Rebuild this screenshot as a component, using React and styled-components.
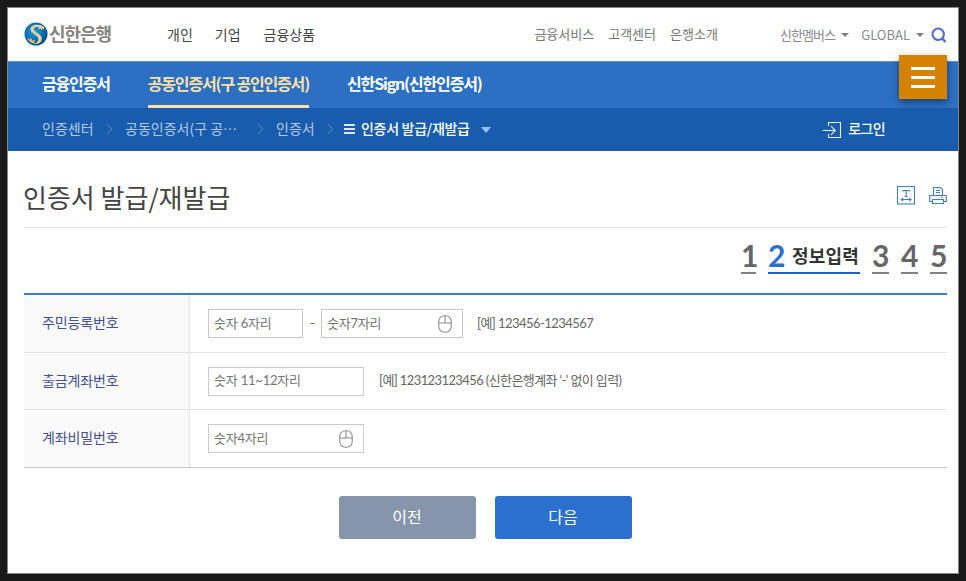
import React from 'react';
import styled, { createGlobalStyle, ThemeProvider } from 'styled-components';

const theme = {
  colors: {
    blue: '#2c70c4',
    deepBlue: '#195cad',
    point: '#2b70cf',
    gold: '#ffe0a3',
    orange: '#d48200',
    label: '#44508f',
    text: '#666666',
    line: '#e1e2e3',
  },
  fonts: {
    base: "'Noto Sans CJK KR', 'Noto Sans', sans-serif",
    number: "Lato, 'Noto Sans CJK KR', sans-serif",
  },
};

const GlobalStyle = createGlobalStyle`
  * { box-sizing: border-box; }
  body {
    margin: 0;
    background: #191919;
    font-family: 'Noto Sans CJK KR', 'Noto Sans', sans-serif;
    overflow: hidden;
  }
  ul { list-style: none; margin: 0; padding: 0; }
`;

const Window = styled.div`
  height: 581px;
  padding: 7px;
  background: #191919;
`;

const Page = styled.div`
  height: 567px;
  background: #ffffff;
  border: 1px solid #868686;
`;

const Header = styled.header`
  height: 53px;
  display: flex;
  align-items: center;
  padding: 0 11px 0 16px;
`;

const Logo = styled.div`
  width: 143px;
  display: flex;
  align-items: center;
  gap: 1px;
  padding-bottom: 2px;
`;

const LogoText = styled.span`
  font-size: 18px;
  line-height: 24px;
  font-weight: 700;
  letter-spacing: -1.1px;
  color: #85857f;
  padding-bottom: 2px;
`;

const MainLinks = styled.ul`
  display: flex;
  gap: 22px;
  padding-bottom: 2px;
  font-size: 14px;
  line-height: 20px;
  color: #444444;

  li:last-child {
    margin-left: 1px;
  }
`;

const SubLinks = styled.ul`
  display: flex;
  gap: 14px;
  margin-left: auto;
  padding-bottom: 2px;
  font-size: 13px;
  line-height: 20px;
  color: #777777;
`;

const ToolLinks = styled.ul`
  display: flex;
  align-items: center;
  margin-left: 62px;
  font-size: 13px;
  line-height: 20px;
  color: #8a8a8a;
`;

const ToolItem = styled.li`
  display: flex;
  align-items: center;
  gap: 6px;
  margin-right: ${props => props.$gap}px;
  letter-spacing: ${props => props.$spacing}px;
`;

const Arrow = styled.i`
  border-top: ${props => props.$h}px solid ${props => props.$color};
  border-left: ${props => props.$w}px solid transparent;
  border-right: ${props => props.$w}px solid transparent;
`;

const MenuBar = styled.nav`
  position: relative;
  height: 47px;
  display: flex;
  gap: 38px;
  padding-left: 34px;
  background: ${props => props.theme.colors.blue};
  border-top: 1px solid #5c92d2;
`;

const MenuItem = styled.span`
  height: 46px;
  font-size: 16px;
  font-weight: 700;
  line-height: 42px;
  letter-spacing: -1.17px;
  white-space: nowrap;
  color: ${props => props.$active ? props.theme.colors.gold : '#ffffff'};
  border-bottom: 3px solid ${props => props.$active ? props.theme.colors.gold : 'transparent'};
`;

const AllMenuButton = styled.button`
  position: absolute;
  top: -7px;
  right: 11px;
  width: 48px;
  height: 44px;
  display: flex;
  flex-direction: column;
  align-items: center;
  justify-content: center;
  gap: 6px;
  padding: 0;
  border: 0;
  background: ${props => props.theme.colors.orange};
  box-shadow: 0 3px 7px rgba(0, 0, 0, 0.45);
`;

const MenuLine = styled.i`
  width: 24px;
  height: 3px;
  background: #ffffff;
`;

const CrumbBar = styled.div`
  height: 43px;
  display: flex;
  align-items: center;
  padding: 0 73px 3px 34px;
  background: ${props => props.theme.colors.deepBlue};
  font-size: 14px;
  line-height: 20px;
  color: #b3cbe8;
`;

const Crumb = styled.span`
  width: ${props => props.$width}px;
  white-space: nowrap;
`;

const CrumbArrow = styled.svg`
  width: 7px;
  height: 12px;
  margin: 2px ${props => props.$after}px 0 0;
`;

const CurrentCrumb = styled.span`
  display: flex;
  align-items: center;
  gap: 6px;
  color: #ffffff;
  letter-spacing: -0.3px;
  font-weight: 500;

  svg {
    margin-top: 2px;
  }

  i {
    margin: 3px 0 0 5px;
  }
`;

const Login = styled.span`
  display: flex;
  align-items: center;
  gap: 6px;
  margin-left: auto;
  color: #ffffff;
  font-weight: 500;
  letter-spacing: -0.6px;

  svg {
    margin-top: 3px;
  }
`;

const LoginText = styled.span`
  padding-bottom: 1px;
`;

const Content = styled.main`
  padding: 0 11px 0 16px;
`;

const TitleRow = styled.div`
  height: 77px;
  display: flex;
  align-items: center;
  padding-top: 16px;
  border-bottom: 1px solid ${props => props.theme.colors.line};
`;

const Title = styled.h1`
  margin: 0 auto 0 -1px;
  font-size: 26px;
  font-weight: 400;
  line-height: 38px;
  letter-spacing: 0;
  color: #444444;
`;

const TitleTools = styled.div`
  display: flex;
  gap: 14px;
  margin-top: -3px;
`;

const Steps = styled.ol`
  height: 65px;
  display: flex;
  justify-content: flex-end;
  gap: 12px;
  margin: 0;
  padding: 13px 0 0;
  list-style: none;
`;

const Step = styled.li`
  width: ${props => props.$width}px;
  height: 33px;
  display: flex;
  align-items: center;
  gap: 7px;
  padding-bottom: 3px;
  font-family: ${props => props.theme.fonts.number};
  font-size: 30px;
  font-weight: 700;
  letter-spacing: -0.4px;
  white-space: nowrap;
  color: ${props => props.$active ? props.theme.colors.point : '#666666'};
  border-bottom: 2px solid ${props => props.$active ? '#2265b8' : '#808080'};
`;

const StepName = styled.span`
  font-size: 18px;
  line-height: 26px;
  letter-spacing: 0.15px;
  padding-top: 1px;
  color: #333333;
`;

const Form = styled.div`
  border-top: 2px solid #3b7cd1;
  border-bottom: 1px solid #c3c7d6;
`;

const Row = styled.div`
  height: ${props => props.$height}px;
  display: flex;
  border-top: ${props => props.$first ? '0' : `1px solid ${props.theme.colors.line}`};
`;

const Label = styled.label`
  width: 166px;
  display: flex;
  align-items: center;
  padding: 0 0 3px 18px;
  background: #f9f9f9;
  border-right: 1px solid ${props => props.theme.colors.line};
  font-size: 14px;
  letter-spacing: -0.15px;
  color: ${props => props.theme.colors.label};
`;

const Cell = styled.div`
  display: flex;
  align-items: center;
  padding-left: 18px;
`;

const Field = styled.div`
  width: ${props => props.$width}px;
  height: 29px;
  display: flex;
  align-items: center;
  padding: 0 10px 0 5px;
  border: 1px solid #c9c9c9;
  background: #ffffff;
`;

const Input = styled.input`
  flex: 1;
  min-width: 0;
  height: 25px;
  padding: 0 0 2px;
  border: 0;
  outline: 0;
  font-family: ${props => props.theme.fonts.number};
  font-size: 13px;
  letter-spacing: -0.2px;
  &::placeholder {
    color: #757575;
  }
`;

const Dash = styled.span`
  width: 18px;
  padding: 0 0 5px 1px;
  text-align: center;
  font-size: 14px;
  line-height: 20px;
  color: ${props => props.theme.colors.text};
`;

const Hint = styled.span`
  margin-left: ${props => props.$gap}px;
  padding-bottom: 2px;
  font-family: ${props => props.theme.fonts.number};
  font-size: 13px;
  line-height: 20px;
  letter-spacing: ${props => props.$spacing}px;
  white-space: nowrap;
  color: ${props => props.theme.colors.text};
`;

const Buttons = styled.div`
  display: flex;
  gap: 19px;
  margin: 28px 0 0 315px;
`;

const Button = styled.button`
  width: 137px;
  height: 43px;
  padding: 0 1px 3px 0;
  border: 0;
  border-radius: 3px;
  background: ${props => props.$primary ? props.theme.colors.point : '#8795aa'};
  font-family: ${props => props.theme.fonts.base};
  font-size: 16px;
  color: #ffffff;
`;

const Emblem = () => (
  <svg width="24" height="24" viewBox="0 0 24 24">
    <defs>
      <radialGradient id="globe" cx="0.42" cy="0.4" r="0.65">
        <stop offset="0" stopColor="#2c9bd5" />
        <stop offset="0.6" stopColor="#0e6db2" />
        <stop offset="1" stopColor="#074780" />
      </radialGradient>
    </defs>
    <circle cx="12" cy="12" r="11.5" fill="url(#globe)" />
    <path d="M20 5L17.6 3.6C13.5 1.8 7 2.6 6.5 7C6.2 11.5 14.6 13 14.4 17.4C14.3 19.8 12 21.4 9.5 21.7C14.5 22.8 17.7 20.4 17.8 16.8C17.9 11.8 9.6 10.5 9.7 7.1C9.8 4.8 13 5 15 5.2L14 7.2L16.4 6.4L17.5 8.2L18 6.4L20.2 7.6Z" fill="#ead39a" />
    <path d="M3.3 15.5L6 17.6L7 15.8L8.5 18.4L11 18L10.2 21.2C7.5 22 4.5 19 3.3 15.5Z" fill="#e2b867" />
  </svg>
);

const SearchIcon = () => (
  <svg width="16" height="16" viewBox="0 0 16 16" fill="none" stroke="#4a6bc9" strokeWidth="2">
    <circle cx="7.2" cy="7.3" r="5.7" />
    <path d="M10.7 11L14.5 14.8" strokeWidth="2.4" />
  </svg>
);

const ListIcon = () => (
  <svg width="11" height="12" viewBox="0 0 11 12" fill="#dce7f4">
    <path d="M0 1H11V3H0ZM0 5H11V7H0ZM0 9H11V11H0Z" />
  </svg>
);

const LoginIcon = () => (
  <svg width="20" height="18" viewBox="0 0 20 18" fill="none" stroke="#e6eff8" strokeWidth="1.1">
    <path d="M6.5 5V1.5H18.5V16.5H6.5V13" />
    <path d="M0.5 9.5H13.5M9 5.2L13.3 9.5L9 13.8" />
  </svg>
);

const TextSizeIcon = () => (
  <svg width="18" height="19" viewBox="0 0 18 19" fill="none" stroke="#3c7ccb" strokeWidth="1.1">
    <rect x="0.5" y="0.5" width="17" height="17.5" />
    <path d="M6 5.5V4.5H12.4V5.5M9.2 4.5V10.5M7.8 10.5H10.6M4.5 13.5H14M6 11.9L4.4 13.5L6 15.1M12.4 11.9L14 13.5L12.4 15.1" />
  </svg>
);

const PrintIcon = () => (
  <svg width="18" height="19" viewBox="0 0 18 19" fill="none" stroke="#3c7ccb" strokeWidth="1.1">
    <path d="M4.5 9.5V1.5H11.5L13.5 3.5V9.5" />
    <path d="M3.5 15.5H0.7V9.5H17.3V15.5H14.5" />
    <path d="M3.5 13.5H14.5V17.5H3.5Z" />
    <path d="M7 4.5H11M7 6.5H11M12 11.3H14" />
  </svg>
);

const MouseIcon = () => (
  <svg width="14" height="18" viewBox="0 0 14 18" fill="none" stroke="#8b8b8b" strokeWidth="1.1">
    <rect x="0.8" y="0.8" width="12.4" height="16.4" rx="5.5" />
    <path d="M7 1V8M0.8 8H13.2" />
  </svg>
);

const Separator = ({ after }) => (
  <CrumbArrow $after={after} viewBox="0 0 7 12" fill="none" stroke="#5a8cca">
    <path d="M0.8 0.8L5.8 6L0.8 11.2" />
  </CrumbArrow>
);

const App = () => {
  return (
    <ThemeProvider theme={theme}>
      <GlobalStyle />
      <Window>
        <Page>
          <Header>
            <Logo>
              <Emblem />
              <LogoText>신한은행</LogoText>
            </Logo>
            <MainLinks>
              <li>개인</li>
              <li>기업</li>
              <li>금융상품</li>
            </MainLinks>
            <SubLinks>
              <li>금융서비스</li>
              <li>고객센터</li>
              <li>은행소개</li>
            </SubLinks>
            <ToolLinks>
              <ToolItem $gap={12} $spacing={-0.9}>
                신한멤버스<Arrow $w={4} $h={4} $color="#808080" />
              </ToolItem>
              <ToolItem $gap={7} $spacing={0}>
                GLOBAL<Arrow $w={4} $h={4} $color="#808080" />
              </ToolItem>
              <SearchIcon />
            </ToolLinks>
          </Header>
          <MenuBar>
            <MenuItem>금융인증서</MenuItem>
            <MenuItem $active>공동인증서(구 공인인증서)</MenuItem>
            <MenuItem>신한Sign(신한인증서)</MenuItem>
            <AllMenuButton>
              <MenuLine />
              <MenuLine />
              <MenuLine />
            </AllMenuButton>
          </MenuBar>
          <CrumbBar>
            <Crumb $width={64}>인증센터</Crumb>
            <Separator after={12} />
            <Crumb $width={132}>공동인증서(구 공⋯</Crumb>
            <Separator after={12} />
            <Crumb $width={51}>인증서</Crumb>
            <Separator after={10} />
            <CurrentCrumb>
              <ListIcon />
              인증서 발급/재발급
              <Arrow $w={5} $h={6} $color="#8cc8f8" />
            </CurrentCrumb>
            <Login>
              <LoginIcon />
              <LoginText>로그인</LoginText>
            </Login>
          </CrumbBar>
          <Content>
            <TitleRow>
              <Title>인증서 발급/재발급</Title>
              <TitleTools>
                <TextSizeIcon />
                <PrintIcon />
              </TitleTools>
            </TitleRow>
            <Steps>
              <Step $width={15}>1</Step>
              <Step $active $width={92}>
                2<StepName>정보입력</StepName>
              </Step>
              <Step $width={17}>3</Step>
              <Step $width={17}>4</Step>
              <Step $width={17}>5</Step>
            </Steps>
            <Form>
              <Row $first $height={57}>
                <Label>주민등록번호</Label>
                <Cell>
                  <Field $width={95}>
                    <Input placeholder="숫자 6자리" />
                  </Field>
                  <Dash>-</Dash>
                  <Field $width={142}>
                    <Input placeholder="숫자7자리" />
                    <MouseIcon />
                  </Field>
                  <Hint $gap={14} $spacing={-0.55}>[예] 123456-1234567</Hint>
                </Cell>
              </Row>
              <Row $height={57}>
                <Label>출금계좌번호</Label>
                <Cell>
                  <Field $width={156}>
                    <Input placeholder="숫자 11~12자리" />
                  </Field>
                  <Hint $gap={15} $spacing={-0.6}>[예] 123123123456 (신한은행계좌 ‘-’ 없이 입력)</Hint>
                </Cell>
              </Row>
              <Row $height={58}>
                <Label>계좌비밀번호</Label>
                <Cell>
                  <Field $width={156}>
                    <Input placeholder="숫자4자리" />
                    <MouseIcon />
                  </Field>
                </Cell>
              </Row>
            </Form>
            <Buttons>
              <Button>이전</Button>
              <Button $primary>다음</Button>
            </Buttons>
          </Content>
        </Page>
      </Window>
    </ThemeProvider>
  );
};

export default App;
